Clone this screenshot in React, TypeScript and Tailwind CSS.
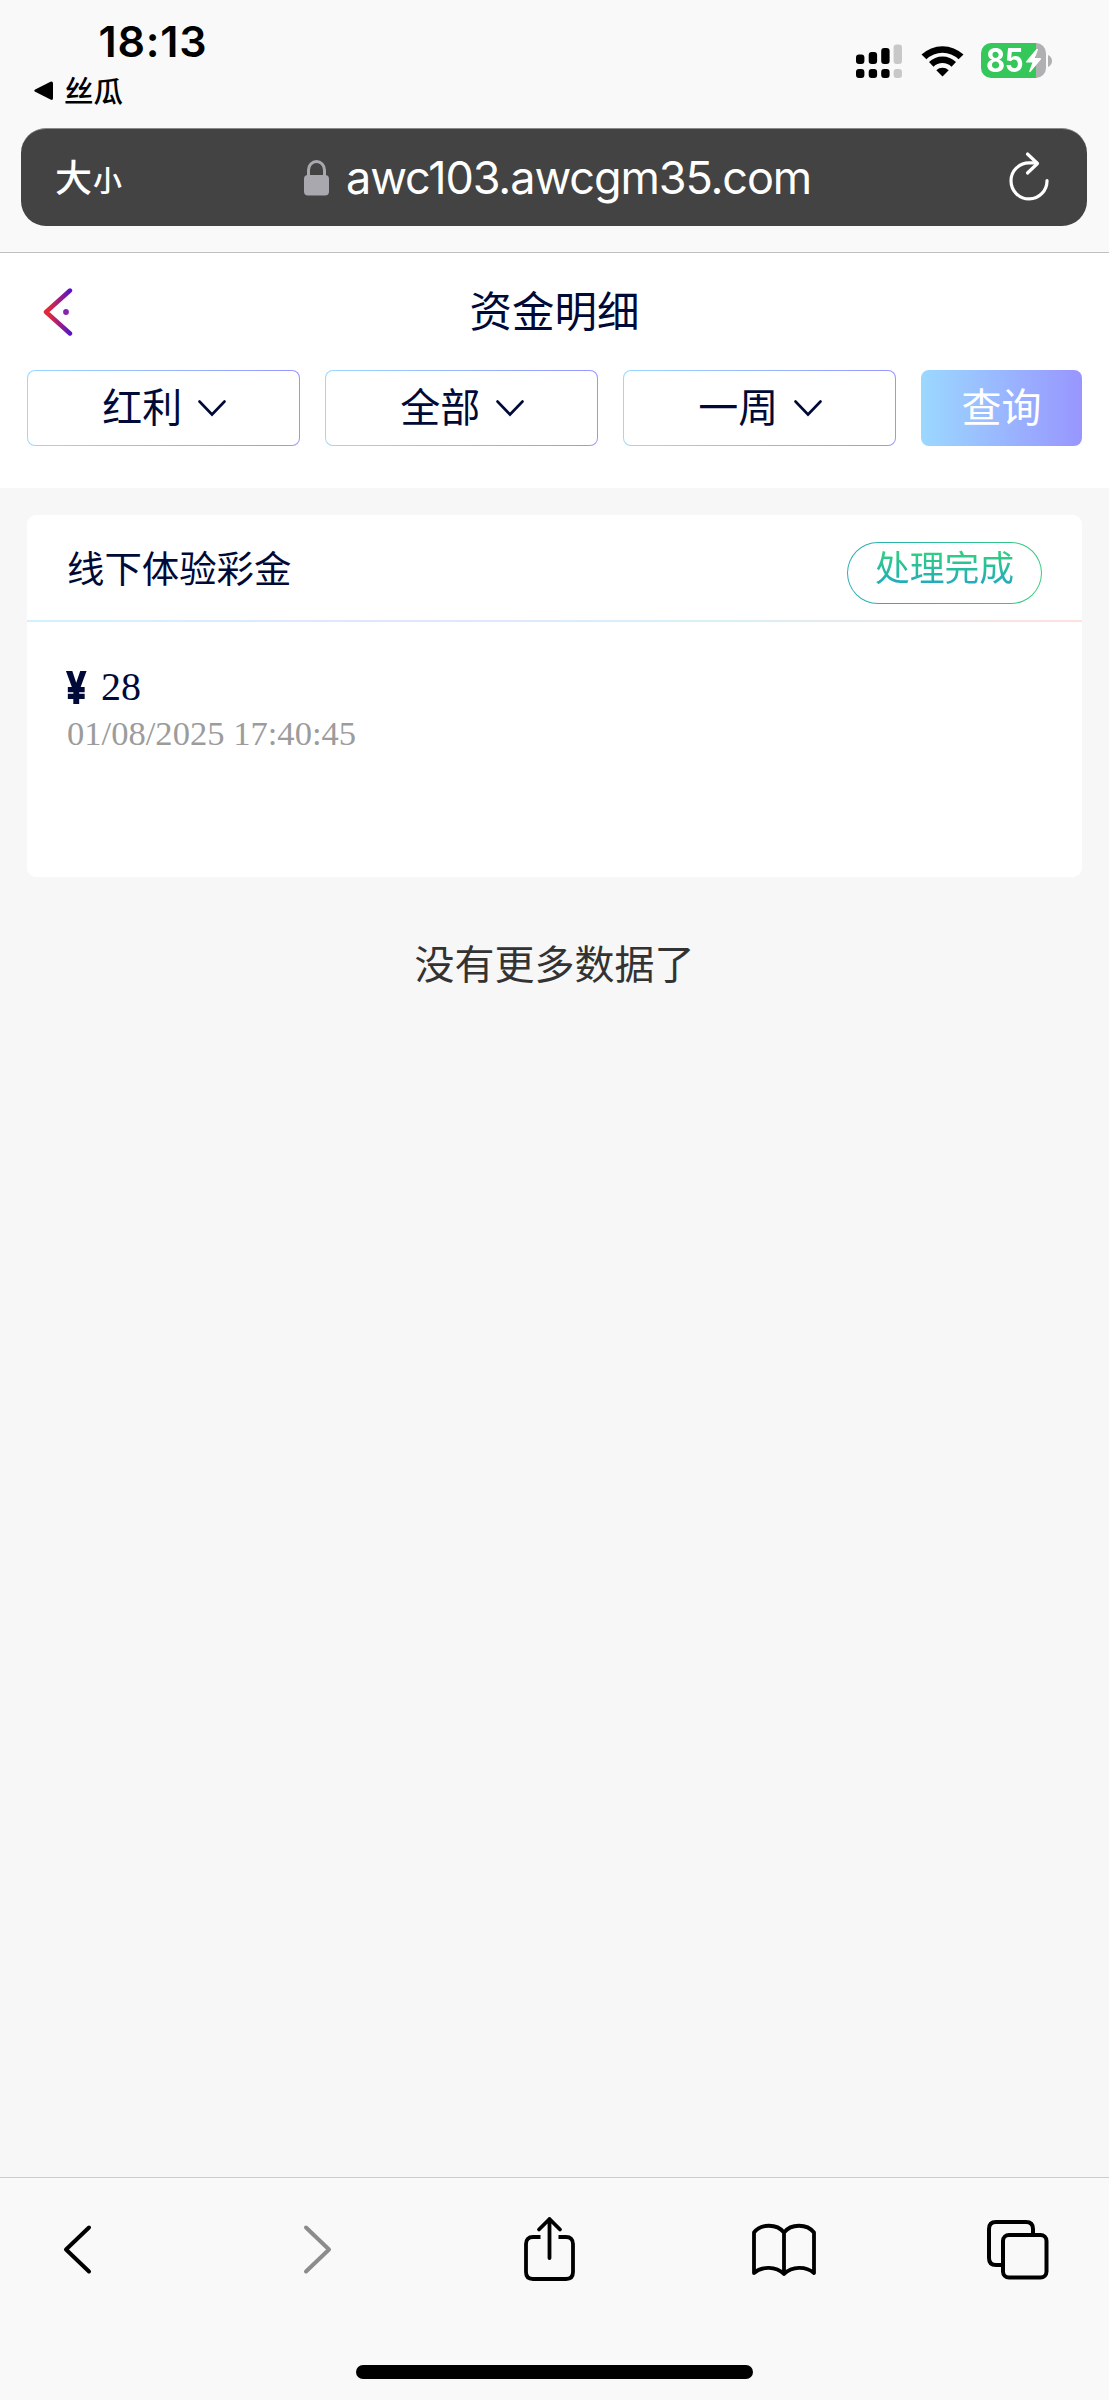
import React from "react";

const cjk = "font-['Noto_Sans_CJK_SC',sans-serif]";

function SignalIcon() {
  return (
    <svg width="46" height="34" viewBox="0 0 46 34" className="mr-[19px]">
      <g fill="#000">
        <rect x="0" y="10.5" width="8.4" height="9.5" rx="3" />
        <rect x="12.7" y="8" width="8.4" height="12" rx="3" />
        <rect x="25.2" y="4" width="8.4" height="16" rx="3" />
        <rect x="0" y="25" width="8.4" height="9" rx="3" />
        <rect x="12.7" y="25" width="8.4" height="9" rx="3" />
        <rect x="25.2" y="25" width="8.4" height="9" rx="3" />
      </g>
      <g fill="#c8c8c8">
        <rect x="37.6" y="0.5" width="8.4" height="19.5" rx="3" />
        <rect x="37.6" y="25" width="8.4" height="9" rx="3" />
      </g>
    </svg>
  );
}

function WifiIcon() {
  return (
    <svg width="43" height="32" viewBox="0 0 43 32" className="mr-[17px]">
      <path d="M0.5 9.6 A30.5 30.5 0 0 1 42.5 9.6 L37.6 14.2 A23.2 23.2 0 0 0 5.4 14.2 Z" fill="#000" />
      <path d="M8 17 A19.5 19.5 0 0 1 35 17 L30.5 21.8 A12.8 12.8 0 0 0 12.5 21.8 Z" fill="#000" />
      <path d="M15.3 25.2 A9.4 9.4 0 0 1 27.7 25.2 L21.5 31.6 Z" fill="#000" />
    </svg>
  );
}

function Battery() {
  return (
    <div className="flex items-center">
      <div className="flex h-[35px] w-[65px] items-center rounded-[10px] bg-[linear-gradient(to_right,#35c759_55px,#b0b0b2_55px)] pl-[5px]">
        <span className="w-[39px] origin-left scale-x-[0.92] font-[Inter,sans-serif] text-[32px] font-bold leading-[40px] tracking-[-0.5px] text-white">
          85
        </span>
        <svg width="18" height="25" viewBox="0 0 18 25" className="shrink-0">
          <path d="M11.5 1 L1 13.6 Q0.6 14.5 1.8 14.5 H7.4 L4 23.8 Q4.6 24.6 5.6 23.8 L16 11.2 Q16.3 10.1 15 10.1 H10 L13 1.6 Q12.5 0.5 11.5 1 Z" fill="#fff" />
        </svg>
      </div>
      <svg width="4" height="12" viewBox="0 0 4 12" className="ml-[2px]">
        <path d="M0 0 C2.5 1 4 3.4 4 6 C4 8.6 2.5 11 0 12 Z" fill="#b0b0b2" />
      </svg>
    </div>
  );
}

function StatusBar() {
  return (
    <div className="flex h-[128px] justify-between">
      <div>
        <div className="ml-[98.5px] mt-[14px] h-[54px] font-[Inter,sans-serif] text-[43px] font-semibold leading-[54px] tracking-[0.8px] text-black">
          18:13
        </div>
        <div className="ml-[34px] mt-[3px] flex h-[40px] items-center">
          <svg width="20" height="20" viewBox="0 0 20 20">
            <path d="M1.2 8.6 L16.5 0.7 Q19 0 19 2.6 V17 Q19 19.6 16.5 18.6 L1.2 10.8 Q-0.6 9.7 1.2 8.6 Z" fill="#000" />
          </svg>
          <span className={`${cjk} mb-[3px] ml-[10px] text-[29.5px] font-medium leading-[37px] text-black`}>丝瓜</span>
        </div>
      </div>
      <div className="mr-[57px] mt-[43px] flex h-[35px] items-center">
        <SignalIcon />
        <WifiIcon />
        <Battery />
      </div>
    </div>
  );
}

function AddressBar() {
  return (
    <div className="ml-[21px] mr-[22px] flex h-[98px] items-center rounded-[25px] border-t border-[#8a8a8a] bg-[#434343] text-white">
      <div className={`${cjk} ml-[34px] flex w-[249px] items-baseline font-medium`}>
        <span className="text-[37px] leading-[50px]">大</span>
        <span className="ml-px text-[29px] leading-[50px]">小</span>
      </div>
      <svg width="25" height="36" viewBox="0 0 25 36">
        <path d="M4.5 17 V10 A8 8.5 0 0 1 20.5 10 V17" fill="none" stroke="#a8a8ae" strokeWidth="3" />
        <rect x="0" y="15" width="25" height="20.5" rx="4" fill="#a8a8ae" />
      </svg>
      <span className="ml-[17px] w-[662px] whitespace-nowrap font-[Inter,sans-serif] text-[45px] leading-[60px] tracking-[-1.1px]">
        awc103.awcgm35.com
      </span>
      <svg width="42" height="50" viewBox="0 0 42 50" className="mb-[3px] shrink-0" fill="none" stroke="#fff" strokeWidth="3.2" strokeLinecap="round" strokeLinejoin="round">
        <path d="M39 29.5 A18 18 0 1 1 21 11.9 H28.5" />
        <path d="M19.5 3 L29.5 12.5 L19.5 22" />
      </svg>
    </div>
  );
}

function Filter({ label }: { label: string }) {
  return (
    <div className="h-[76px] w-[273.3px] rounded-[8px] bg-[linear-gradient(to_right,#9bd8ff,#9896fe)] p-[1.3px]">
      <div className="flex h-full w-full items-center justify-center rounded-[7px] bg-white">
        <span className={`${cjk} mb-[7px] ml-px text-[40px] leading-[60px] text-[#000a38]`}>{label}</span>
        <svg width="28" height="17" viewBox="0 0 28 17" className="ml-[16px]">
          <path d="M1.5 1.5 L14 14.5 L26.5 1.5" fill="none" stroke="#000a38" strokeWidth="2.6" strokeLinecap="round" />
        </svg>
      </div>
    </div>
  );
}

function PageHeader() {
  return (
    <div className="h-[235px] bg-white">
      <div className="grid h-[117px] grid-cols-[1fr_auto_1fr] items-center">
        <svg width="30" height="52" viewBox="0 0 30 52" className="ml-[43px]">
          <defs>
            <linearGradient id="backStroke" x1="0" y1="0" x2="30" y2="0" gradientUnits="userSpaceOnUse">
              <stop offset="0.2" stopColor="#e0283c" />
              <stop offset="0.9" stopColor="#5a14c8" />
            </linearGradient>
          </defs>
          <path d="M27 4.5 L3 26 L27 47.5" fill="none" stroke="url(#backStroke)" strokeWidth="4.4" strokeLinecap="round" strokeLinejoin="round" />
          <circle cx="23" cy="26" r="2.9" fill="#8424b0" />
        </svg>
        <h1 className={`${cjk} mb-[5px] text-[42.5px] leading-[60px] text-[#000a38]`}>资金明细</h1>
        <div />
      </div>
      <div className="flex justify-between px-[27px]">
        <Filter label="红利" />
        <Filter label="全部" />
        <Filter label="一周" />
        <button className={`${cjk} h-[76px] w-[161px] rounded-[8px] bg-[linear-gradient(to_right,#9bd8ff,#9896fe)] pb-[7px] text-[40px] text-white`}>
          查询
        </button>
      </div>
    </div>
  );
}

function RecordCard() {
  return (
    <div className="mx-[27px] mt-[27px] h-[362px] rounded-[9px] bg-white">
      <div className="flex h-[105px] items-start justify-between pl-[40px] pr-[40px]">
        <span className={`${cjk} mt-[22px] text-[37.4px] leading-[60px] text-[#000a38]`}>线下体验彩金</span>
        <div className="mt-[27px] h-[62px] w-[195px] rounded-full bg-[linear-gradient(to_right,#27adb9,#34cc7c)] p-[1.2px]">
          <div className="flex h-full w-full justify-center rounded-full bg-white">
            <span className={`${cjk} h-[46px] bg-[linear-gradient(to_bottom,#34d17c_15%,#22adb8_85%)] bg-clip-text text-[34.8px] leading-[46px] text-transparent`}>
              处理完成
            </span>
          </div>
        </div>
      </div>
      <div className="h-[2px] bg-[linear-gradient(to_right,#d2f1fc,#e0e6ff_35%,#d6f0f7_65%,#ffdfdf)]" />
      <div className="pl-[40px] pt-[40px] font-['Liberation_Serif',serif]">
        <div className="flex h-[50px] items-center text-[40px] leading-[50px] text-[#000a38]">
          <span className="mt-px w-[34px] origin-left scale-x-[0.74] font-['Liberation_Sans',sans-serif] text-[45px] font-bold leading-[50px] [-webkit-text-stroke:2px_#000a38]">¥</span>
          <span>28</span>
        </div>
        <div className="mt-px text-[34.6px] leading-[40px] text-[#9c9c9c]">01/08/2025 17:40:45</div>
      </div>
    </div>
  );
}

function TabBar() {
  return (
    <div className="flex h-[223px] flex-col items-center border-t border-[#cdcdcd] bg-[#f9f9f9]">
      <div className="mt-[35px] flex h-[72px] w-full items-center pl-[62px]">
        <svg width="30" height="52" viewBox="0 0 30 52" fill="none" stroke="#000" strokeWidth="4" strokeLinecap="round" strokeLinejoin="round">
          <path d="M27 4.5 L4 26.5 L27 48.5" />
        </svg>
        <svg width="30" height="52" viewBox="0 0 30 52" className="ml-[211px]" fill="none" stroke="#8c8c8c" strokeWidth="4" strokeLinecap="round" strokeLinejoin="round">
          <path d="M3 4.5 L26 26.5 L3 48.5" />
        </svg>
        <svg width="52" height="66" viewBox="0 0 52 66" className="ml-[190px]" fill="none" stroke="#000" strokeWidth="3.8" strokeLinecap="round" strokeLinejoin="round">
          <path d="M17.5 21 H10 Q3 21 3 28 V56 Q3 63 10 63 H43 Q50 63 50 56 V28 Q50 21 43 21 H35.5" strokeLinecap="butt" />
          <path d="M26.5 42 V3 M16 13.5 L26.5 3 L37 13.5" />
        </svg>
        <svg width="64" height="54" viewBox="0 0 64 54" className="ml-[177px] mt-[2px]" fill="none" stroke="#000" strokeWidth="3.8" strokeLinecap="round" strokeLinejoin="round">
          <path d="M32 9.5 C25 0.5 9 0.5 2 9.5 V50 C10 43 24 43 32 51 C40 43 54 43 62 50 V9.5 C55 0.5 39 0.5 32 9.5 Z M32 9.5 V51" />
        </svg>
        <svg width="62" height="60" viewBox="0 0 62 60" className="ml-[171px] mt-[2px]" fill="none" stroke="#000" strokeWidth="4">
          <rect x="16" y="15" width="43.5" height="42.5" rx="6" />
          <path d="M16 45 H9 Q2 45 2 38 V9 Q2 2 9 2 H39 Q46 2 46 9 V15" />
        </svg>
      </div>
      <div className="mt-[80px] h-[14px] w-[397px] rounded-full bg-black" />
    </div>
  );
}

export default function App() {
  return (
    <div className="flex h-[2400px] w-[1109px] flex-col overflow-hidden bg-[#f7f7f7]">
      <header className="h-[253px] border-b border-[#c0c0c0] bg-[#f9f9f9]">
        <StatusBar />
        <AddressBar />
      </header>
      <main className="flex-1">
        <PageHeader />
        <RecordCard />
        <p className={`${cjk} mt-[55px] text-center text-[40px] leading-[60px] text-[#333]`}>没有更多数据了</p>
      </main>
      <TabBar />
    </div>
  );
}
